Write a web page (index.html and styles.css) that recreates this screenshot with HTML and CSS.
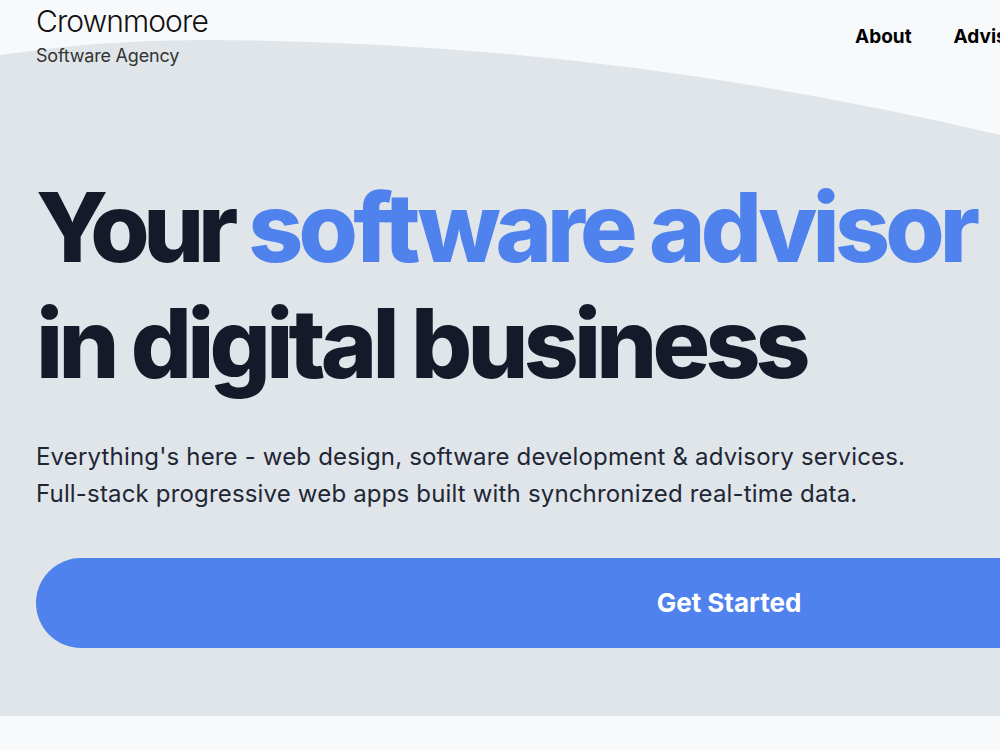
FILE: index.html
```html
<!DOCTYPE html>
<html lang="en">
<head>
    <meta charset="UTF-8">
    <meta name="viewport" content="width=device-width, initial-scale=1.0">
    <title>Crownmoore - Software Agency</title>
    <link rel="stylesheet" href="styles.css">
</head>
<body>

<div class="page">
    <div class="top">
        <header class="header">
            <div class="brand">
                <div class="brand-name">Crownmoore</div>
                <div class="brand-tag">Software Agency</div>
            </div>
            <nav class="nav">
                <a href="#about">About</a>
                <a href="#advisory">Advisory</a>
                <a href="#contact">Contact</a>
            </nav>
        </header>

        <section class="hero">
            <h1><span class="kern">Your</span> <span class="accent">software advisor</span><br>in digital business</h1>
            <p>Everything's here - web design, software development &amp; advisory services.<br>
               Full-stack progressive web apps built with synchronized real-time data.</p>
            <a class="button" href="#start">Get Started</a>
        </section>
    </div>
</div>

</body>
</html>
```

FILE: styles.css
```css
html, body {
    margin: 0;
    padding: 0;
    overflow: hidden;
}
body {
    font-family: 'Inter', 'Noto Sans', sans-serif;
    background-color: #f8f9fb;
    color: #111827;
}
.page {
    width: 1458px;
}
.top {
    position: relative;
    background-color: #dfe5e9;
    padding: 5px 36px 68px;
}
/* light area above the curved edge */
.top::before {
    content: '';
    position: absolute;
    left: 0;
    top: 0;
    width: 100%;
    height: 300px;
    background-color: #f8f9fb;
    clip-path: path('M0 0 L1458 0 L1458 275 Q1229 175 1000 135 Q600 40 200 40 Q100 40 0 55 Z');
}
.header, .hero {
    position: relative;
}
.header {
    display: grid;
    grid-template-columns: 819px 1fr;
    align-items: start;
}
.brand-name {
    font-size: 30px;
    font-weight: 300;
    line-height: 32px;
    letter-spacing: -0.03em;
    color: #111;
}
.brand-tag {
    margin-top: 5px;
    font-size: 18px;
    line-height: 28px;
    letter-spacing: -0.2px;
    color: #333;
}
.nav {
    display: flex;
    gap: 42px;
    margin-top: 18px;
}
.nav a {
    font-size: 19px;
    font-weight: 700;
    line-height: 28px;
    color: #000;
    text-decoration: none;
}
.hero h1 {
    margin: 99px 0 0;
    font-size: 96px;
    font-weight: 800;
    line-height: 116px;
    letter-spacing: -0.05em;
    color: #141a29;
}
.kern {
    letter-spacing: -0.065em;
}
.accent {
    color: #4f82ed;
}
.hero p {
    margin: 37px 0 0;
    font-size: 24px;
    line-height: 37px;
    letter-spacing: 0.17px;
    color: #1f2636;
}
.button {
    display: block;
    margin-top: 46px;
    height: 90px;
    line-height: 90px;
    border-radius: 45px;
    background-color: #4f82ed;
    color: white;
    font-size: 26px;
    font-weight: 700;
    text-align: center;
    text-decoration: none;
}
```
